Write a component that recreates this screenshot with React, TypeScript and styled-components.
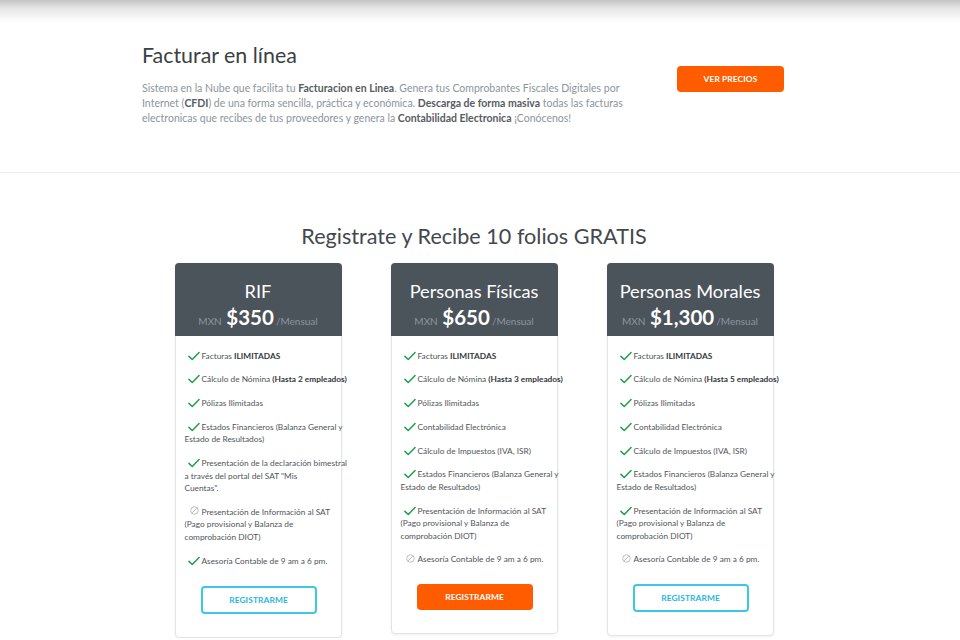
import React from "react";
import styled, { createGlobalStyle } from "styled-components";

const Global = createGlobalStyle`
  html, body { margin: 0; padding: 0; background: #fff; }
  body { font-family: Lato, "Open Sans", "Liberation Sans", sans-serif; }
  * { box-sizing: border-box; }
`;

const Page = styled.div`
  width: 100%;
`;

const TopShade = styled.div`
  height: 24px;
  background: linear-gradient(to bottom, #c4c4c4 0%, #e6e6e6 35%, #fafafa 80%, #ffffff 100%);
`;

const Container = styled.div`
  width: 664px;
  margin: 0 calc(50% - 326px) 0 calc(50% - 338px);
`;

const Hero = styled.section`
  border-bottom: 1px solid #ececec;
  padding: 17px 0 46px;
`;

const HeroRow = styled.div`
  display: flex;
  align-items: flex-start;
`;

const HeroText = styled.div`
  width: 535px;
`;

const HeroTitle = styled.h1`
  margin: 0;
  font-size: 21.4px;
  font-weight: 400;
  line-height: 28px;
  color: #3b3f44;
`;

const HeroPara = styled.p`
  margin: 12px 0 0;
  font-size: 10.5px;
  line-height: 15px;
  color: #8e949b;
  white-space: nowrap;
  b {
    color: #575c61;
    font-weight: 700;
  }
`;

const Button = styled.button<{ $variant: "solid" | "outline" }>`
  display: block;
  font-family: inherit;
  font-weight: 700;
  font-size: 8.4px;
  letter-spacing: 0.1px;
  cursor: pointer;
  border-radius: 4px;
  padding: 0;
  ${(p) =>
    p.$variant === "solid"
      ? `background: #ff5c00; color: #fff; border: none; height: 26px;`
      : `background: #fff; color: #27b6dc; border: 2px solid #3ec6ea; height: 28px;`}
`;

const PriceButton = styled(Button)`
  width: 107px;
  margin-top: 25px;
`;

const Plans = styled.section`
  padding: 49px 0 0;
`;

const PlansTitle = styled.h2`
  margin: 0;
  text-align: center;
  font-size: 21.6px;
  font-weight: 400;
  line-height: 28px;
  color: #44484d;
`;

const Cards = styled.div`
  margin-top: 13px;
  display: flex;
  justify-content: center;
  align-items: flex-start;
  gap: 49px;
`;

const Card = styled.div`
  width: 167px;
  border: 1px solid #e4e4e4;
  border-radius: 4px;
  box-shadow: 0 1px 3px rgba(0, 0, 0, 0.06);
  background: #fff;
`;

const CardHead = styled.div`
  height: 73px;
  margin: -1px -1px 0;
  background: #4b535b;
  border-radius: 4px 4px 0 0;
  color: #fff;
  text-align: center;
  padding-top: 17px;
`;

const PlanName = styled.div`
  font-size: 18.2px;
  line-height: 22px;
  font-weight: 400;
`;

const PriceLine = styled.div`
  margin-top: 3px;
  line-height: 24px;
  font-size: 10px;
  color: #8d959d;
  strong {
    font-size: 20.5px;
    font-weight: 700;
    color: #fff;
    margin: 0 2px;
  }
`;

const CardBody = styled.div`
  padding: 13.5px 0 23px 9px;
  display: flex;
  flex-direction: column;
  align-items: flex-start;
`;

const Features = styled.ul`
  list-style: none;
  margin: 0;
  padding: 0;
  display: flex;
  flex-direction: column;
  gap: 11.25px;
`;

const Feature = styled.li`
  font-size: 8.3px;
  line-height: 12.5px;
  color: #50555a;
  white-space: nowrap;
  b {
    color: #33373b;
    font-weight: 700;
  }
`;

const IconWrap = styled.span`
  display: inline-block;
  width: 17px;
  height: 8px;
  vertical-align: baseline;
  svg {
    display: block;
    overflow: visible;
  }
`;

const CardButton = styled(Button)`
  width: 116px;
  margin: 18.5px 0 0 16px;
`;

const Check = () => (
  <IconWrap>
    <svg width="12" height="10" viewBox="0 0 13 10" style={{ marginLeft: 3, marginTop: 0 }}>
      <path d="M1 5.4 L4.6 8.8 L12 1.2" fill="none" stroke="#1f9d4c" strokeWidth="1.6" strokeLinecap="round" strokeLinejoin="round" />
    </svg>
  </IconWrap>
);

const Ban = () => (
  <IconWrap>
    <svg width="9" height="9" viewBox="0 0 10 10" style={{ marginLeft: 5, marginTop: -0.5 }}>
      <circle cx="5" cy="5" r="4.2" fill="none" stroke="#b9b9b9" strokeWidth="1" />
      <path d="M2.1 7.9 L7.9 2.1" stroke="#b9b9b9" strokeWidth="1" />
    </svg>
  </IconWrap>
);

type Item = { ok: boolean; content: React.ReactNode };

type Plan = {
  name: string;
  price: string;
  items: Item[];
  variant: "solid" | "outline";
};

const plans: Plan[] = [
  {
    name: "RIF",
    price: "$350",
    variant: "outline",
    items: [
      { ok: true, content: <>Facturas <b>ILIMITADAS</b></> },
      { ok: true, content: <>Cálculo de Nómina <b>(Hasta 2 empleados)</b></> },
      { ok: true, content: <>Pólizas Ilimitadas</> },
      { ok: true, content: <>Estados Financieros (Balanza General y<br />Estado de Resultados)</> },
      { ok: true, content: <>Presentación de la declaración bimestral<br />a través del portal del SAT "Mis<br />Cuentas".</> },
      { ok: false, content: <>Presentación de Información al SAT<br />(Pago provisional y Balanza de<br />comprobación DIOT)</> },
      { ok: true, content: <>Asesoría Contable de 9 am a 6 pm.</> },
    ],
  },
  {
    name: "Personas Físicas",
    price: "$650",
    variant: "solid",
    items: [
      { ok: true, content: <>Facturas <b>ILIMITADAS</b></> },
      { ok: true, content: <>Cálculo de Nómina <b>(Hasta 3 empleados)</b></> },
      { ok: true, content: <>Pólizas Ilimitadas</> },
      { ok: true, content: <>Contabilidad Electrónica</> },
      { ok: true, content: <>Cálculo de Impuestos (IVA, ISR)</> },
      { ok: true, content: <>Estados Financieros (Balanza General y<br />Estado de Resultados)</> },
      { ok: true, content: <>Presentación de Información al SAT<br />(Pago provisional y Balanza de<br />comprobación DIOT)</> },
      { ok: false, content: <>Asesoría Contable de 9 am a 6 pm.</> },
    ],
  },
  {
    name: "Personas Morales",
    price: "$1,300",
    variant: "outline",
    items: [
      { ok: true, content: <>Facturas <b>ILIMITADAS</b></> },
      { ok: true, content: <>Cálculo de Nómina <b>(Hasta 5 empleados)</b></> },
      { ok: true, content: <>Pólizas Ilimitadas</> },
      { ok: true, content: <>Contabilidad Electrónica</> },
      { ok: true, content: <>Cálculo de Impuestos (IVA, ISR)</> },
      { ok: true, content: <>Estados Financieros (Balanza General y<br />Estado de Resultados)</> },
      { ok: true, content: <>Presentación de Información al SAT<br />(Pago provisional y Balanza de<br />comprobación DIOT)</> },
      { ok: false, content: <>Asesoría Contable de 9 am a 6 pm.</> },
    ],
  },
];

export default function App() {
  return (
    <Page>
      <Global />
      <TopShade />
      <Hero>
        <Container>
          <HeroRow>
            <HeroText>
              <HeroTitle>Facturar en línea</HeroTitle>
              <HeroPara>
                Sistema en la Nube que facilita tu <b>Facturacion en Linea</b>. Genera tus Comprobantes Fiscales Digitales por
                <br />
                Internet (<b>CFDI</b>) de una forma sencilla, práctica y económica. <b>Descarga de forma masiva</b> todas las facturas
                <br />
                electronicas que recibes de tus proveedores y genera la <b>Contabilidad Electronica</b> ¡Conócenos!
              </HeroPara>
            </HeroText>
            <PriceButton $variant="solid">VER PRECIOS</PriceButton>
          </HeroRow>
        </Container>
      </Hero>
      <Plans>
        <Container>
          <PlansTitle>Registrate y Recibe 10 folios GRATIS</PlansTitle>
          <Cards>
            {plans.map((p) => (
              <Card key={p.name}>
                <CardHead>
                  <PlanName>{p.name}</PlanName>
                  <PriceLine>
                    MXN <strong>{p.price}</strong>/Mensual
                  </PriceLine>
                </CardHead>
                <CardBody>
                  <Features>
                    {p.items.map((it, i) => (
                      <Feature key={i}>
                        {it.ok ? <Check /> : <Ban />}
                        {it.content}
                      </Feature>
                    ))}
                  </Features>
                  <CardButton $variant={p.variant}>REGISTRARME</CardButton>
                </CardBody>
              </Card>
            ))}
          </Cards>
        </Container>
      </Plans>
    </Page>
  );
}
